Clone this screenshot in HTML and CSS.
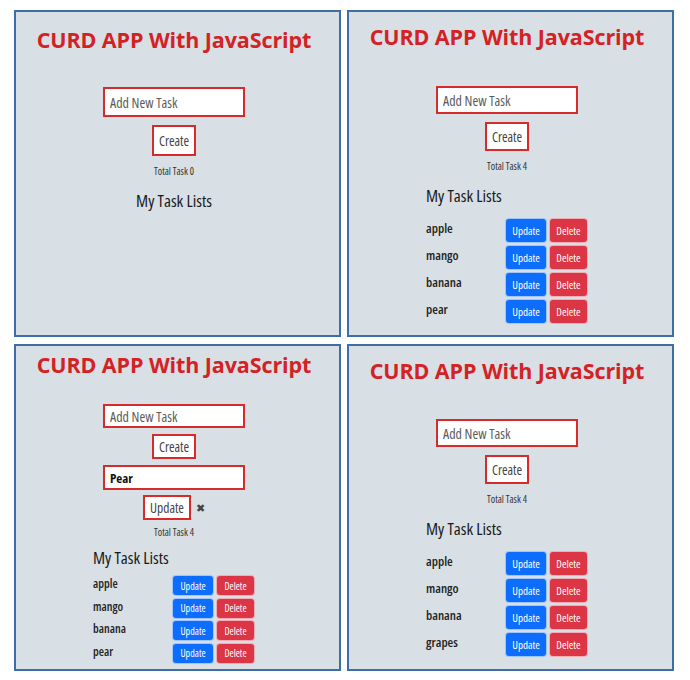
FILE: index.html
```html
<!DOCTYPE html>
<html lang="en">
<head>
<meta charset="utf-8">
<title>CURD APP With JavaScript</title>
<link rel="stylesheet" href="styles.css">
</head>
<body>
<main class="grid">
  <section class="panel p1">
    <h1 class="title">CURD APP With JavaScript</h1>
    <input class="field" type="text" placeholder="Add New Task">
    <button class="outline">Create</button>
    <p class="total">Total Task 0</p>
    <div class="list">
      <h2 class="list-title">My Task Lists</h2>
    </div>
  </section>

  <section class="panel p2">
    <h1 class="title">CURD APP With JavaScript</h1>
    <input class="field" type="text" placeholder="Add New Task">
    <button class="outline">Create</button>
    <p class="total">Total Task 4</p>
    <div class="list">
      <h2 class="list-title">My Task Lists</h2>
      <ul class="rows">
        <li class="row"><span class="name">apple</span><button class="btn update">Update</button><button class="btn delete">Delete</button></li>
        <li class="row"><span class="name">mango</span><button class="btn update">Update</button><button class="btn delete">Delete</button></li>
        <li class="row"><span class="name">banana</span><button class="btn update">Update</button><button class="btn delete">Delete</button></li>
        <li class="row"><span class="name">pear</span><button class="btn update">Update</button><button class="btn delete">Delete</button></li>
      </ul>
    </div>
  </section>

  <section class="panel p3">
    <h1 class="title">CURD APP With JavaScript</h1>
    <input class="field" type="text" placeholder="Add New Task">
    <button class="outline">Create</button>
    <input class="field filled" type="text" value="Pear">
    <div class="edit-row">
      <button class="outline">Update</button>
      <span class="cancel">&#10006;</span>
    </div>
    <p class="total">Total Task 4</p>
    <div class="list">
      <h2 class="list-title">My Task Lists</h2>
      <ul class="rows">
        <li class="row"><span class="name">apple</span><button class="btn update">Update</button><button class="btn delete">Delete</button></li>
        <li class="row"><span class="name">mango</span><button class="btn update">Update</button><button class="btn delete">Delete</button></li>
        <li class="row"><span class="name">banana</span><button class="btn update">Update</button><button class="btn delete">Delete</button></li>
        <li class="row"><span class="name">pear</span><button class="btn update">Update</button><button class="btn delete">Delete</button></li>
      </ul>
    </div>
  </section>

  <section class="panel p4">
    <h1 class="title">CURD APP With JavaScript</h1>
    <input class="field" type="text" placeholder="Add New Task">
    <button class="outline">Create</button>
    <p class="total">Total Task 4</p>
    <div class="list">
      <h2 class="list-title">My Task Lists</h2>
      <ul class="rows">
        <li class="row"><span class="name">apple</span><button class="btn update">Update</button><button class="btn delete">Delete</button></li>
        <li class="row"><span class="name">mango</span><button class="btn update">Update</button><button class="btn delete">Delete</button></li>
        <li class="row"><span class="name">banana</span><button class="btn update">Update</button><button class="btn delete">Delete</button></li>
        <li class="row"><span class="name">grapes</span><button class="btn update">Update</button><button class="btn delete">Delete</button></li>
      </ul>
    </div>
  </section>
</main>
</body>
</html>
```

FILE: styles.css
```css
* { box-sizing: border-box; }

html, body {
  margin: 0;
  background: #ffffff;
}

body {
  font-family: "Open Sans", "Noto Sans", sans-serif;
  font-stretch: 82%;
  color: #212529;
}

.grid {
  display: grid;
  grid-template-columns: 327px 327px;
  grid-template-rows: 327px 327px;
  column-gap: 6px;
  row-gap: 7px;
  padding: 10px 0 0 14px;
}

.panel {
  border: 2px solid #3d6fa5;
  background: #d8dfe5;
  display: flex;
  flex-direction: column;
  align-items: center;
  padding: 11px 7px 0 0;
  --field-h: 28px;
  --gap: 8px;
}

.title {
  margin: 0;
  font-size: 21.5px;
  line-height: 28px;
  font-weight: 700;
  font-stretch: 100%;
  letter-spacing: -0.1px;
  color: #d42224;
  white-space: nowrap;
}

.field {
  width: 142px;
  height: var(--field-h);
  margin: 35px 0 0;
  border: 2px solid #d72a2a;
  background: #ffffff;
  padding: 0 5px;
  font-family: inherit;
  font-stretch: 86%;
  font-size: 14px;
  color: #222;
  outline: none;
}

.field::placeholder { color: #5c5c5c; }

.field.filled {
  font-weight: 700;
  color: #111;
  font-size: 13px;
}

.outline {
  height: calc(var(--field-h) + 1px);
  margin-top: var(--gap);
  padding: 0 5px;
  border: 2px solid #d72a2a;
  background: #ffffff;
  font-family: inherit;
  font-stretch: 86%;
  font-size: 13.5px;
  color: #444;
}

.total {
  margin: 9px 0 0;
  font-size: 10px;
  line-height: 13px;
  color: #333;
}

.list {
  margin-top: 12px;
  display: flex;
  flex-direction: column;
  align-items: flex-start;
}

.list-title {
  margin: 0;
  font-size: 17px;
  line-height: 22px;
  font-weight: 500;
  color: #1a1a1a;
}

.rows {
  list-style: none;
  margin: 11px 0 0;
  padding: 0;
  display: flex;
  flex-direction: column;
  gap: 2px;
}

.row {
  display: grid;
  grid-template-columns: 77px 42px 39px;
  column-gap: 2px;
  align-items: center;
}

.name {
  font-size: 13px;
  font-weight: 600;
  color: #222;
  align-self: start;
  line-height: 20px;
}

.btn {
  height: 25px;
  padding: 0;
  border: 1px solid rgba(255,255,255,0.6);
  border-radius: 4px;
  color: #ffffff;
  font-family: inherit;
  font-stretch: 82%;
  font-size: 11px;
}

.update { background: #0d6efd; }
.delete { background: #dc3545; }

/* panel 1 */
.p1 { padding-top: 14px; --field-h: 30px; }
.p1 .field { margin-top: 33px; }

/* panel 3: compact */
.p3 { padding-top: 5px; --field-h: 24px; --gap: 6px; }
.p3 .field { margin-top: 25px; }
.p3 .field.filled { margin-top: 6px; height: 25px; }
.p3 .total { margin-top: 6px; }
.p3 .list { margin-top: 8px; }
.p3 .rows { margin-top: 6px; gap: 1.5px; }
.p3 .btn { height: 21px; font-size: 10px; }
.p3 .name { line-height: 17px; font-size: 12px; }

.edit-row {
  display: flex;
  align-items: center;
  gap: 5px;
  margin-top: 5px;
}

.edit-row .outline { height: 25px; margin-top: 0; }

.cancel {
  font-size: 11px;
  color: #444;
}

/* panel 4 */
.p4 { padding-top: 11px; }
.p4 .field { margin-top: 34px; }
```
